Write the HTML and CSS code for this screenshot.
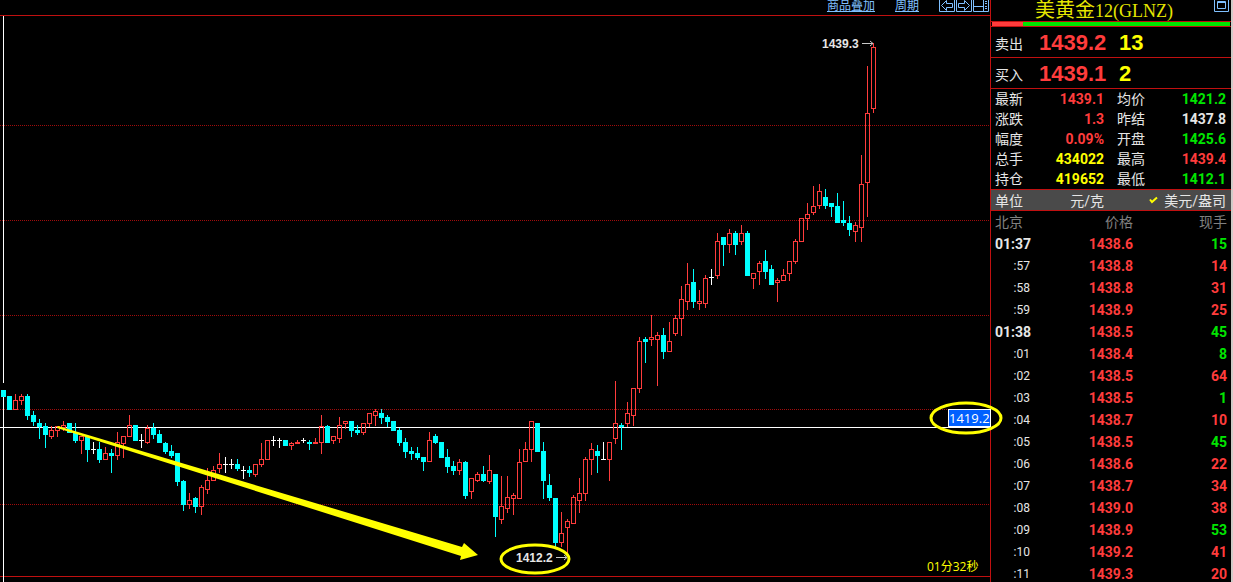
FILE: index.html
```
<!DOCTYPE html>
<html lang="zh-CN">
<head>
  <meta charset="UTF-8" />
  <meta name="viewport" content="width=device-width, initial-scale=1.0"/>
  <title>美黄金12(GLNZ)</title>
  <link rel="stylesheet" href="styles.css">
</head>
<body>
  <div class="app">
    <main class="chart">
      <nav class="toolbar">
        <a href="#">商品叠加</a>
        <a href="#">周期</a>
        <div class="tools">
          <button type="button" aria-label="左移">
            <svg width="17" height="12" viewBox="0 0 17 12"><path d="M.5 0V11.5H15.5V0M2.5 5.5L7.5 .5V3.5H13.5V7.5H7.5V10.5Z"/></svg>
          </button>
          <button type="button" aria-label="右移">
            <svg width="17" height="12" viewBox="0 0 17 12"><path d="M.5 0V11.5H15.5V0M13.5 5.5L8.5 .5V3.5H2.5V7.5H8.5V10.5Z"/></svg>
          </button>
          <button type="button" aria-label="分栏">
            <svg width="17" height="12" viewBox="0 0 17 12"><path d="M.5 0V11.5H15.5V0M.5 6.5H10.5M10.5 0V11.5M12 1.5H14M12 3.5H14M12 6.5H14M12 8.5H14"/></svg>
          </button>
        </div>
      </nav>
      <svg class="kline" id="kline" viewBox="0 16 990 566">
        <g class="grid">
          <path d="M0 125.5H990M0 220.5H990M0 315.5H990M0 409.5H990M0 504.5H990"/>
        </g>
        <path class="base" d="M0 576.5H990"/>
        <path class="cross" d="M3.5 16V383M3.5 397V582M0 427.5H990"/>
        <g id="candles"></g>
        <polygon class="trend" points="57,427 58,426 462,547 464,543 478,555 460,560 461,556 57,428"/>
        <text class="mark" x="822" y="48">1439.3</text>
        <path class="pointer" d="M862 43.5H873M870 41L873 43.5L870 46"/>
        <text class="mark" x="516" y="562">1412.2</text>
        <path class="pointer" d="M556 557.5H567M564 555L567 557.5L564 560"/>
        <ellipse class="ring" cx="535" cy="559" rx="34" ry="14"/>
        <rect class="tag" x="948.5" y="409.5" width="42" height="17"/>
        <text class="tag-text" x="949" y="423">1419.2</text>
        <ellipse class="ring" cx="966" cy="418" rx="35" ry="15"/>
        <text class="countdown" x="927" y="571">01分32秒</text>
      </svg>
    </main>

    <aside class="panel">
      <header class="title">
        <h1>美黄金<span>12(GLNZ)</span></h1>
        <button type="button" aria-label="窗口">
          <svg width="15" height="12" viewBox="0 0 15 12"><path d="M.5 0V11.5H14.5V0M3.5 1.5H11.5V8.5H3.5ZM3.5 2.5H11.5"/></svg>
        </button>
      </header>
      <div class="ratio"><div></div></div>
      <div class="deal"><span>卖出</span><b>1439.2</b><i>13</i></div>
      <div class="deal"><span>买入</span><b>1439.1</b><i>2</i></div>
      <table class="quote">
        <tr><th>最新</th><td class="up">1439.1</td><th>均价</th><td class="down">1421.2</td></tr>
        <tr><th>涨跌</th><td class="up">1.3</td><th>昨结</th><td class="flat">1437.8</td></tr>
        <tr><th>幅度</th><td class="up">0.09%</td><th>开盘</th><td class="down">1425.6</td></tr>
        <tr><th>总手</th><td class="vol">434022</td><th>最高</th><td class="up">1439.4</td></tr>
        <tr><th>持仓</th><td class="vol">419652</td><th>最低</th><td class="down">1412.1</td></tr>
      </table>
      <div class="unit">
        <span>单位</span>
        <button type="button">元/克</button>
        <button type="button" class="on">
          <svg width="9" height="8" viewBox="0 0 9 8"><path d="M1 3.5L3 6L8 1.5"/></svg>美元/盎司
        </button>
      </div>
      <table class="ticks">
        <thead><tr><th>北京</th><th>价格</th><th>现手</th></tr></thead>
        <tbody>
          <tr><td class="minute">01:37</td><td>1438.6</td><td class="down">15</td></tr>
          <tr><td>:57</td><td>1438.8</td><td>14</td></tr>
          <tr><td>:58</td><td>1438.8</td><td>31</td></tr>
          <tr><td>:59</td><td>1438.9</td><td>25</td></tr>
          <tr><td class="minute">01:38</td><td>1438.5</td><td class="down">45</td></tr>
          <tr><td>:01</td><td>1438.4</td><td class="down">8</td></tr>
          <tr><td>:02</td><td>1438.5</td><td>64</td></tr>
          <tr><td>:03</td><td>1438.5</td><td class="down">1</td></tr>
          <tr><td>:04</td><td>1438.7</td><td>10</td></tr>
          <tr><td>:05</td><td>1438.5</td><td class="down">45</td></tr>
          <tr><td>:06</td><td>1438.6</td><td>22</td></tr>
          <tr><td>:07</td><td>1438.7</td><td>34</td></tr>
          <tr><td>:08</td><td>1439.0</td><td>38</td></tr>
          <tr><td>:09</td><td>1438.9</td><td class="down">53</td></tr>
          <tr><td>:10</td><td>1439.2</td><td>41</td></tr>
          <tr><td>:11</td><td>1439.3</td><td>20</td></tr>
        </tbody>
      </table>
    </aside>
  </div>

  <script src="chart.js"></script>
</body>
</html>
```
FILE: styles.css
```
* {
  box-sizing: border-box;
}
body {
  margin: 0;
  background: #000;
  color: #e6e6e6;
  font-family: Roboto, "Noto Sans CJK SC", sans-serif;
  font-size: 14px;
  overflow: hidden;
}
button {
  padding: 0;
  border: none;
  background: none;
  color: inherit;
  font: inherit;
  cursor: pointer;
}
svg {
  display: block;
  fill: none;
}
.app {
  display: grid;
  grid-template-columns: 1fr 243px;
  height: 100vh;
}

/* chart */
.chart {
  min-width: 0;
}
.toolbar {
  display: flex;
  justify-content: flex-end;
  gap: 20px;
  height: 16px;
  border-bottom: 1px solid #c01010;
}
.toolbar a {
  color: #80c0ff;
  font-size: 12px;
  line-height: 12px;
}
.tools {
  display: flex;
  align-items: flex-start;
}
.tools svg, .title svg {
  stroke: #80c0ff;
}
.kline {
  position: relative;
  z-index: 1;
  width: 100%;
  overflow: visible;
}
.grid {
  stroke: #a00c0c;
  stroke-dasharray: 1 1;
}
.base {
  stroke: #c01010;
}
.cross {
  stroke: #fff;
}
.up-candle {
  stroke: #ff3c3c;
}
.down-candle {
  stroke: #0ff;
}
.down-candle rect {
  fill: #0ff;
}
.flat-candle {
  stroke: #fff;
}
.trend {
  fill: #ff0;
}
.ring {
  stroke: #ff0;
  stroke-width: 3;
}
.pointer {
  stroke: #c8c8c8;
}
.mark {
  fill: #e6e6e6;
  font: bold 12px "Liberation Sans", sans-serif;
}
.tag {
  fill: #0060ff;
  stroke: #fff;
}
.tag-text {
  fill: #fff;
  font: 13px "Open Sans", sans-serif;
}
.countdown {
  fill: #ff0;
  font: 12px "Open Sans", "Noto Sans CJK SC", sans-serif;
}

/* quote panel */
.panel {
  overflow: hidden;
  border-left: 1px solid #c01010;
  border-right: 2px solid #d0ccc8;
}
.title {
  display: flex;
  align-items: flex-start;
  justify-content: flex-end;
  gap: 41px;
  height: 22px;
  padding-right: 2px;
  border-bottom: 1px solid #c01010;
}
.title h1 {
  margin: 0;
  color: #e6e600;
  font: 20px/20px "Liberation Serif", "Noto Sans CJK SC", serif;
}
.title span {
  font-size: 18px;
}
.ratio {
  height: 5px;
  padding: 0 1px;
  border-bottom: 1px solid #c01010;
}
.ratio div {
  height: 4px;
  background: linear-gradient(to right, #ff3c3c 13%, #00e600 13%);
}
.deal {
  display: grid;
  grid-template-columns: 44px 80px 1fr;
  align-items: center;
  height: 31px;
  padding: 1px 0 0 4px;
  border-bottom: 1px solid #c01010;
}
.deal b, .deal i {
  font: bold 22px "Liberation Sans", sans-serif;
}
.deal b {
  color: #ff3c3c;
}
.deal i {
  color: #ff0;
}
table {
  width: 100%;
  border-collapse: collapse;
  table-layout: fixed;
}
th, td {
  padding: 0;
}
th {
  font-weight: normal;
  text-align: left;
}
td {
  font-weight: bold;
  text-align: right;
}
.quote th, .quote td {
  height: 20px;
  line-height: 20px;
}
.quote th {
  width: 50px;
  padding-left: 4px;
}
.quote td:nth-child(2) {
  width: 63px;
}
.quote td:last-child {
  padding-right: 5px;
}
.quote th:nth-child(3) {
  padding-left: 13px;
}
.up {
  color: #ff3c3c;
}
.vol {
  color: #ff0;
}
.unit {
  display: grid;
  grid-template-columns: 60px 49px 1fr;
  align-items: center;
  height: 22px;
  padding: 0 5px 0 4px;
  border: solid #c01010;
  border-width: 1px 0;
  background: #4a4a4a;
}
.unit button {
  text-align: right;
}
.unit .on {
  display: flex;
  align-items: center;
  justify-content: flex-end;
  gap: 6px;
}
.unit svg {
  stroke: #ff0;
  stroke-width: 2;
}
.ticks th, .ticks td {
  height: 22px;
  color: #ff3c3c;
  line-height: 22px;
}
.ticks th {
  color: #808080;
}
.ticks th:nth-child(n+2) {
  text-align: right;
}
.ticks th:first-child {
  width: 60px;
  padding-left: 4px;
}
.ticks th:nth-child(2) {
  width: 82px;
}
.ticks th:last-child, .ticks td:last-child {
  padding-right: 4px;
}
.ticks td:first-child {
  padding-right: 21px;
  color: #e6e6e6;
  font-size: 12px;
  font-weight: normal;
}
.ticks td.minute {
  padding: 0 0 0 4px;
  font-size: 14px;
  font-weight: bold;
  text-align: left;
}
.quote .down, .ticks .down {
  color: #00e600;
}
```
FILE: chart.js
```
// [kind, high, body top, body bottom, low], u = up, d = down, f = flat
const candles = [
  ['d',390,390,397,397],['d',396,396,410,410],['u',394,400,410,410],['u',394,396,401,405],
  ['d',394,396,416,420],['d',411,415,422,426],['d',419,423,427,439],['d',423,426,435,448],
  ['u',426,430,437,439],['u',426,426,431,437],['u',421,425,428,431],['d',423,423,433,433],
  ['d',423,432,441,443],['u',436,436,441,454],['d',436,436,450,462],['f',442,449,450,454],
  ['d',442,449,460,463],['u',447,453,460,460],['d',449,453,456,473],['u',432,442,456,460],
  ['u',436,436,444,458],['u',415,425,437,437],['d',425,425,441,441],['f',434,440,441,448],
  ['u',425,428,443,444],['d',423,428,435,439],['d',430,434,443,443],['d',442,443,452,454],
  ['d',445,451,456,458],['d',453,453,482,486],['d',480,481,505,511],['u',493,500,505,509],
  ['d',497,498,507,513],['u',485,487,507,515],['u',468,480,490,494],['u',466,470,481,481],
  ['u',453,464,469,473],['f',457,464,465,473],['f',459,464,465,469],['d',459,464,469,471],
  ['f',466,470,471,479],['d',466,470,473,477],['u',464,464,475,477],['u',443,459,465,467],
  ['u',440,440,460,460],['f',436,440,441,446],['f',438,440,441,448],['d',440,440,446,446],
  ['u',442,443,446,450],['u',440,442,444,444],['f',438,440,441,443],['d',440,442,444,450],
  ['u',438,442,444,444],['u',415,426,443,454],['d',425,426,443,443],['u',436,436,441,444],
  ['u',417,425,439,443],['u',421,421,424,429],['d',421,421,431,437],['d',425,430,433,435],
  ['u',423,423,433,435],['u',413,413,424,427],['u',409,411,416,426],['d',409,413,418,424],
  ['d',415,417,422,427],['d',421,421,431,431],['d',428,430,443,446],['d',438,442,452,458],
  ['d',447,451,454,460],['d',447,453,458,460],['d',457,457,462,471],['u',432,440,462,462],
  ['d',434,436,443,444],['d',442,442,458,458],['d',449,457,467,473],['d',461,466,471,475],
  ['u',459,462,471,475],['d',461,462,496,499],['u',478,478,492,499],['u',472,474,481,482],
  ['d',466,474,481,482],['u',455,470,482,484],['d',474,474,517,537],['u',476,506,520,524],
  ['u',476,497,509,513],['u',493,495,499,515],['u',449,462,499,499],['u',442,449,462,462],
  ['u',421,421,450,462],['d',423,423,452,452],['d',442,451,481,499],['d',474,485,498,501],
  ['d',498,498,543,548],['u',512,533,543,547],['u',519,521,528,556],['u',495,497,524,524],
  ['u',478,493,501,513],['u',457,459,494,501],['u',443,449,460,475],['d',445,451,456,473],
  ['f',442,459,460,460],['u',442,442,460,481],['u',381,423,439,444],['d',423,425,427,450],
  ['u',402,413,424,427],['u',388,388,416,426],['u',337,341,389,393],['d',337,339,342,363],
  ['u',315,337,340,346],['u',332,335,340,386],['d',328,335,352,359],['u',322,341,352,352],
  ['u',315,318,334,336],['u',286,299,319,336],['u',263,284,302,310],['d',269,282,302,308],
  ['u',290,301,304,310],['u',275,278,304,308],['f',269,277,278,285],['u',233,241,276,279],
  ['d',237,237,245,266],['u',229,233,245,253],['d',231,233,245,255],['u',225,233,242,245],
  ['d',231,233,276,276],['u',273,273,279,289],['u',261,263,272,285],['d',250,261,272,279],
  ['d',265,269,285,285],['u',278,280,283,302],['u',269,275,281,281],['u',261,261,274,281],
  ['u',239,241,262,264],['u',218,218,242,242],['u',203,214,219,230],['u',186,206,213,215],
  ['u',184,191,206,209],['d',189,197,206,209],['d',203,203,207,217],['d',193,206,223,223],
  ['d',201,220,223,226],['d',216,223,230,236],['u',222,225,232,242],['u',155,184,228,242],
  ['u',66,113,183,217],['u',43,47,109,113]
];

const names = { u: 'up-candle', d: 'down-candle', f: 'flat-candle' };
const step = 6;

document.getElementById('candles').innerHTML = candles.map(([kind, high, top, bottom, low], i) => {
  const x = 3.5 + i * step;
  const wick = `<path d="M${x} ${high}V${top}M${x} ${bottom}V${low}"/>`;
  const body = kind === 'f'
    ? `<path d="M${x - 2.5} ${top + 0.5}H${x + 2.5}M${x} ${top}V${bottom}"/>`
    : `<rect x="${x - 2}" y="${top + 0.5}" width="4" height="${bottom - top - 1}"/>`;
  return `<g class="${names[kind]}">${wick}${body}</g>`;
}).join('');
```
